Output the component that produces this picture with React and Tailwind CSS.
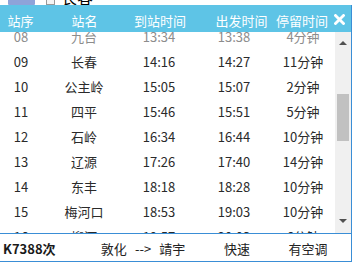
import React from "react";

const stops = [
  { no: "08", name: "九台", arrive: "13:34", depart: "13:38", stay: "4分钟", faded: true },
  { no: "09", name: "长春", arrive: "14:16", depart: "14:27", stay: "11分钟" },
  { no: "10", name: "公主岭", arrive: "15:05", depart: "15:07", stay: "2分钟" },
  { no: "11", name: "四平", arrive: "15:46", depart: "15:51", stay: "5分钟" },
  { no: "12", name: "石岭", arrive: "16:34", depart: "16:44", stay: "10分钟" },
  { no: "13", name: "辽源", arrive: "17:26", depart: "17:40", stay: "14分钟" },
  { no: "14", name: "东丰", arrive: "18:18", depart: "18:28", stay: "10分钟" },
  { no: "15", name: "梅河口", arrive: "18:53", depart: "19:03", stay: "10分钟" },
  { no: "16", name: "柳河", arrive: "19:57", depart: "20:03", stay: "6分钟" }
];

const font = "font-['Noto_Sans_CJK_SC','Noto_Sans',sans-serif]";

function App() {
  return (
    <div className={`w-[354px] h-[264px] bg-white overflow-hidden ${font} text-[13px] leading-none`}>

      {/* strip of the page behind the dialog */}
      <div className="h-[5px] overflow-hidden">
        <div className="flex items-end gap-[12px] pl-[8px] -mt-[12px] h-[17px]">
          <div className="w-[27px] h-[16px] bg-[#8ea3d9] rounded-[1px]" />
          <div className="w-[9px] h-[10px] border border-[#999] bg-[#f4f4f4] -ml-[1px]" />
          <span className="text-[16px] text-black -ml-[6px]">长春</span>
        </div>
      </div>

      <div className="w-[352px] border-r border-[#3a8ed6]">

        {/* ================= HEADER ================= */}
        <div className="h-[27px] bg-[#5ec4e6] text-white grid grid-cols-[41px_87px_64px_99px_22px_1fr] items-center pt-[3px]">
          <div className="flex justify-center whitespace-nowrap">站序</div>
          <div className="flex justify-center whitespace-nowrap">站名</div>
          <div className="flex justify-center whitespace-nowrap">到站时间</div>
          <div className="flex justify-center whitespace-nowrap">出发时间</div>
          <div className="flex justify-center whitespace-nowrap">停留时间</div>
          <div className="flex justify-end pr-[6px] -mt-[2px]">
            <svg width="11" height="11" viewBox="0 0 11 11">
              <path d="M1.5 1.5 L9.5 9.5 M9.5 1.5 L1.5 9.5" stroke="#fff" strokeWidth="2.8" strokeLinecap="square" />
            </svg>
          </div>
        </div>

        {/* ================= BODY ================= */}
        <div className="h-[201px] flex">
          <div className="w-[335px] overflow-hidden">
            <div className="-mt-[8px]">
              {stops.map(s => (
                <div
                  key={s.no}
                  className={`h-[25px] grid grid-cols-[42px_84px_66px_84px_54px] items-center ${s.faded ? "text-[#8c8c8c]" : "text-[#2a2a2a]"}`}
                >
                  <div className="text-center">{s.no}</div>
                  <div className="text-center">{s.name}</div>
                  <div className="text-center">{s.arrive}</div>
                  <div className="text-center">{s.depart}</div>
                  <div className="text-center">{s.stay}</div>
                </div>
              ))}
            </div>
          </div>

          {/* scrollbar */}
          <div className="w-[16px] bg-[#f0f0f0] flex flex-col items-center">
            <div className="h-[17px] flex items-center justify-center pt-[3px]">
              <svg width="8" height="5" viewBox="0 0 8 5"><path d="M0 5 L4 1 L8 5 Z" fill="#505050" /></svg>
            </div>
            <div className="h-[45px]" />
            <div className="w-[12px] h-[47px] bg-[#c1c1c1]" />
            <div className="flex-1" />
            <div className="h-[17px] flex items-center justify-center pb-[6px]">
              <svg width="8" height="5" viewBox="0 0 8 5"><path d="M0 0 L8 0 L4 4 Z" fill="#505050" /></svg>
            </div>
          </div>
        </div>

        {/* ================= FOOTER ================= */}
        <div className="h-[29px] border-y border-[#3a8ed6] flex items-center pt-[1px] text-[#222]">
          <div className="w-[100px] pl-[3px] font-bold text-[#1a1a1a]">K7388次</div>
          <div className="w-[86px] flex justify-center gap-[8px] whitespace-nowrap">
            <span>敦化</span>
            <span>--&gt;</span>
            <span>靖宇</span>
          </div>
          <div className="w-[50px] ml-[26px] text-center">快速</div>
          <div className="w-[50px] ml-[21px] text-center">有空调</div>
        </div>

      </div>

    </div>
  );
}

export default App;
